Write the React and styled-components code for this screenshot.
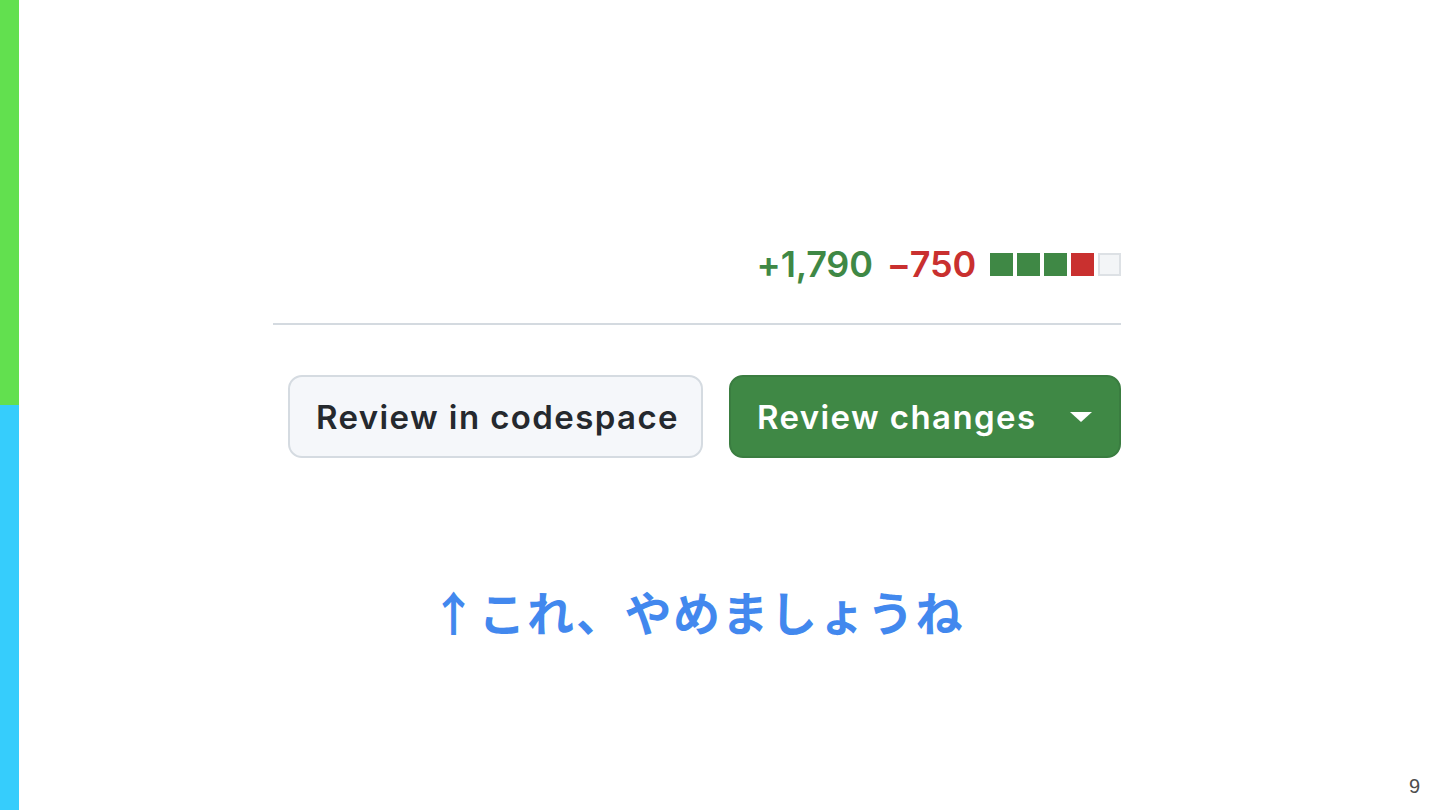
import React from 'react';
import styled, { createGlobalStyle } from 'styled-components';

const GlobalStyle = createGlobalStyle`
  html, body {
    margin: 0;
    padding: 0;
    background: #ffffff;
  }
  body {
    font-family: Inter, "Noto Sans", "Liberation Sans", sans-serif;
  }
`;

const Slide = styled.div`
  display: flex;
  width: 1440px;
  height: 810px;
  overflow: hidden;
  background: #ffffff;
`;

const SideBar = styled.div`
  display: flex;
  flex-direction: column;
  width: 19px;
  flex-shrink: 0;
`;

const SideBlock = styled.div`
  height: ${({ h }) => h}px;
  background: ${({ color }) => color};
`;

const Main = styled.div`
  position: relative;
  flex: 1;
  padding: 242px 0 0 254px;
`;

const Panel = styled.div`
  display: flex;
  flex-direction: column;
  width: 848px;
`;

const StatsRow = styled.div`
  display: flex;
  justify-content: flex-end;
  align-items: center;
  gap: 14px;
  height: 44px;
  font-weight: 600;
  font-size: 36px;
  letter-spacing: -0.2px;
`;

const Count = styled.span`
  color: ${({ color }) => color};
`;

const Squares = styled.div`
  display: flex;
  gap: 4px;
`;

const Square = styled.span`
  width: 23px;
  height: 23px;
  box-sizing: border-box;
  background: ${({ color }) => color};
  border: ${({ empty }) => (empty ? '2px solid #dde1e5' : 'none')};
`;

const Divider = styled.hr`
  margin: 37px 0 0;
  border: none;
  height: 2px;
  background: #d4dae0;
`;

const ButtonRow = styled.div`
  display: flex;
  justify-content: flex-end;
  gap: 26px;
  margin-top: 50px;
`;

const Button = styled.div`
  display: flex;
  align-items: center;
  box-sizing: border-box;
  height: 83px;
  width: ${({ w }) => w}px;
  padding: 0 0 0 ${({ pl }) => pl}px;
  border-radius: 14px;
  font-size: 33px;
  font-weight: 600;
  letter-spacing: 1.4px;
  background: ${({ primary }) => (primary ? '#3f8845' : '#f5f7fa')};
  color: ${({ primary }) => (primary ? '#ffffff' : '#25292e')};
  border: 2px solid ${({ primary }) => (primary ? '#3a7d40' : '#d5dbe1')};
`;

const Caret = styled.svg`
  width: 22px;
  height: 10px;
  margin-left: auto;
  margin-right: 27px;
  fill: #ffffff;
`;

const Note = styled.div`
  margin-top: 118px;
  text-align: center;
  font-family: "Noto Sans CJK JP", "Noto Sans", sans-serif;
  font-weight: 700;
  font-size: 47px;
  letter-spacing: 1.5px;
  color: #4288ee;
`;

const PageNumber = styled.div`
  position: absolute;
  right: 20px;
  bottom: 12px;
  font-family: "Liberation Sans", Arial, sans-serif;
  font-size: 20px;
  color: #4d4d4d;
`;

const bar = ['#3f8845', '#3f8845', '#3f8845', '#c9302f'];

export default function App() {
  return (
    <>
      <GlobalStyle />
      <Slide>
        <SideBar>
          <SideBlock h={405} color="#62e04f" />
          <SideBlock h={405} color="#36cdfc" />
        </SideBar>
        <Main>
          <Panel>
            <StatsRow>
              <Count color="#3f8845">+1,790</Count>
              <Count color="#c9302f">−750</Count>
              <Squares>
                {bar.map((c, i) => (
                  <Square key={i} color={c} />
                ))}
                <Square empty color="#f3f5f7" />
              </Squares>
            </StatsRow>
            <Divider />
            <ButtonRow>
              <Button w={415} pl={26}>Review in codespace</Button>
              <Button primary w={392} pl={26}>
                Review changes
                <Caret viewBox="0 0 22 10">
                  <path d="M0 0h22L11 10z" />
                </Caret>
              </Button>
            </ButtonRow>
            <Note>↑これ、やめましょうね</Note>
          </Panel>
          <PageNumber>9</PageNumber>
        </Main>
      </Slide>
    </>
  );
}
